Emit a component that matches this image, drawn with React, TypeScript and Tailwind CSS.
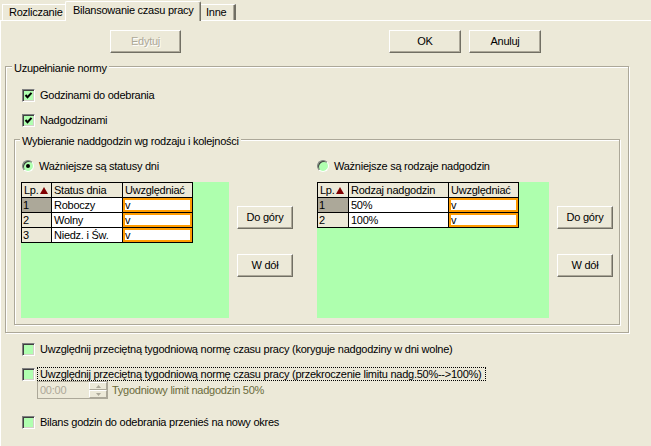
import React from 'react';

const Btn: React.FC<{ label: string; disabled?: boolean; className?: string }> = ({ label, disabled, className }) => (
    <button
        className={`h-[23px] flex items-center justify-center bg-[#ece9d8] border border-t-white border-l-white border-r-[#716f64] border-b-[#716f64] shadow-[inset_-1px_-1px_0_#aca899] ${disabled ? 'text-[#aca899] [text-shadow:1px_1px_0_#fff]' : 'text-black'} ${className ?? ''}`}
    >
        <span className="font-normal">{label}</span>
    </button>
);

const Check: React.FC<{ checked?: boolean }> = ({ checked }) => (
    <span className="w-[13px] h-[13px] shrink-0 flex items-center justify-center bg-[#b0ffb0] border border-t-[#808080] border-l-[#808080] border-b-white border-r-white shadow-[inset_1px_1px_0_#404040,inset_-1px_-1px_0_#d4d0c8]">
        {checked && (
            <svg width="9" height="9" viewBox="0 0 9 9">
                <path d="M1.5 4 L3.5 6.2 L7.5 1.8" fill="none" stroke="#000" strokeWidth="2" />
            </svg>
        )}
    </span>
);

const Radio: React.FC<{ checked?: boolean }> = ({ checked }) => (
    <span className="w-[12px] h-[12px] shrink-0 rounded-full flex items-center justify-center bg-[#b0ffb0] border border-t-[#808080] border-l-[#808080] border-b-white border-r-white shadow-[inset_1px_1px_0_#404040]">
        {checked && <span className="w-[4px] h-[4px] rounded-full bg-black" />}
    </span>
);

const SortArrow = () => (
    <svg width="8" height="7" viewBox="0 0 8 7" className="ml-[1px]">
        <path d="M4 0 L8 7 L0 7 Z" fill="#800000" />
    </svg>
);

type Row = { lp: string; name: string };

const Grid: React.FC<{ cols: string; title: string; rows: Row[]; width: string }> = ({ cols, title, rows, width }) => (
    <div className={`bg-[#aeffae] h-[136px] ${width}`}>
        <div className={`grid ${cols} w-fit border-l border-t border-black`}>
            <div className="h-[15px] border-r border-b border-black bg-[#ece9d8] pl-[2px] flex items-center">
                Lp.<SortArrow />
            </div>
            <div className="h-[15px] border-r border-b border-black bg-[#ece9d8] pl-[2px] flex items-center">{title}</div>
            <div className="h-[15px] border-r border-b border-black bg-[#ece9d8] pl-[2px] flex items-center">Uwzględniać</div>
            {rows.map((r, i) => (
                <React.Fragment key={r.lp}>
                    <div className={`h-[15px] border-r border-b border-black pl-[1px] flex items-center ${i === 0 ? 'bg-[#aca899]' : 'bg-[#ece9d8]'}`}>{r.lp}</div>
                    <div className="h-[15px] border-r border-b border-black bg-white pl-[2px] flex items-center">{r.name}</div>
                    <div className="h-[15px] border-r border-b border-black bg-white pl-[2px] flex items-center shadow-[inset_0_0_0_2px_#ff9c00]">v</div>
                </React.Fragment>
            ))}
        </div>
    </div>
);

const SideButtons = () => (
    <div className="flex flex-col pt-[24px] gap-[25px]">
        <Btn label="Do góry" className="w-[56px]" />
        <Btn label="W dół" className="w-[56px]" />
    </div>
);

export default function App() {
    return (
        <div className="w-[651px] h-[446px] overflow-hidden bg-[#ece9d8] text-[11px] leading-[13px] tracking-[-0.25px] text-black font-['Liberation_Sans',Arial,sans-serif]">
            {/* Tabs */}
            <div className="relative z-10 flex items-end h-[21px] pl-[2px]">
                <div className="h-[16px] mb-[1px] w-[63px] pl-[6px] border-t border-l border-white flex items-center">Rozliczanie</div>
                <div className="h-[20px] w-[136px] pl-[7px] bg-[#ece9d8] border-t border-l border-white border-r border-r-[#716f64] shadow-[inset_-1px_0_0_#aca899] rounded-t-[2px] flex items-center pb-[2px]">
                    Bilansowanie czasu pracy
                </div>
                <div className="h-[16px] mb-[1px] w-[35px] pl-[5px] border-t border-white border-r-2 border-r-[#716f64] shadow-[inset_-1px_0_0_#aca899] flex items-center">Inne</div>
            </div>

            {/* Tab panel */}
            <div className="-mt-[1px] h-[430px] border-t border-l border-white">
                <div className="flex pt-[9px] pl-[109px]">
                    <Btn label="Edytuj" disabled className="w-[71px]" />
                    <Btn label="OK" className="w-[72px] ml-[208px]" />
                    <Btn label="Anuluj" className="w-[72px] ml-[8px]" />
                </div>

                <fieldset className="ml-[4px] mt-[5px] w-[624px] border border-[#aca899] shadow-[inset_1px_1px_0_#fff,1px_1px_0_#fff] pb-[7px]">
                    <legend className="ml-[6px] px-[2px] pt-[4px] bg-[#ece9d8]">Uzupełnianie normy</legend>
                    <div className="flex items-center mt-[14px] ml-[16px] gap-[5px]">
                        <Check checked />
                        <span>Godzinami do odebrania</span>
                    </div>
                    <div className="flex items-center mt-[12px] ml-[16px] gap-[5px]">
                        <Check checked />
                        <span>Nadgodzinami</span>
                    </div>

                    <fieldset className="ml-[8px] mt-[4px] w-[606px] border border-[#aca899] shadow-[inset_1px_1px_0_#fff,1px_1px_0_#fff] pb-[6px]">
                        <legend className="ml-[5px] px-[2px] pt-[4px] bg-[#ece9d8]">Wybieranie naddgodzin wg rodzaju i kolejności</legend>
                        <div className="flex pl-[6px] mt-[12px] gap-[24px]">
                            <div className="flex flex-col">
                                <div className="flex items-center gap-[5px] ml-[1px] h-[12px]">
                                    <Radio checked />
                                    <span>Ważniejsze są statusy dni</span>
                                </div>
                                <div className="flex gap-[8px] mt-[10px]">
                                    <Grid
                                        width="w-[208px]"
                                        cols="grid-cols-[30px_71px_70px]"
                                        title="Status dnia"
                                        rows={[
                                            { lp: '1', name: 'Roboczy' },
                                            { lp: '2', name: 'Wolny' },
                                            { lp: '3', name: 'Niedz. i Św.' },
                                        ]}
                                    />
                                    <SideButtons />
                                </div>
                            </div>
                            <div className="flex flex-col">
                                <div className="flex items-center gap-[5px] h-[12px]">
                                    <Radio />
                                    <span>Ważniejsze są rodzaje nadgodzin</span>
                                </div>
                                <div className="flex gap-[8px] mt-[10px]">
                                    <Grid
                                        width="w-[232px]"
                                        cols="grid-cols-[31px_100px_70px]"
                                        title="Rodzaj nadgodzin"
                                        rows={[
                                            { lp: '1', name: '50%' },
                                            { lp: '2', name: '100%' },
                                        ]}
                                    />
                                    <SideButtons />
                                </div>
                            </div>
                        </div>
                    </fieldset>
                </fieldset>

                {/* Bottom options */}
                <div className="flex items-center mt-[10px] ml-[21px] gap-[5px]">
                    <Check />
                    <span>Uwzględnij przeciętną tygodniową normę czasu pracy (koryguje nadgodziny w dni wolne)</span>
                </div>
                <div className="flex items-center mt-[11px] ml-[21px] gap-[2px]">
                    <Check />
                    <span className="border border-dotted border-black pl-[2px] pr-[3px] leading-[12px]">
                        Uwzględnij przeciętną tygodniową normę czasu pracy (przekroczenie limitu nadg.50%--&gt;100%)
                    </span>
                </div>
                <div className="flex items-center ml-[36px] mt-0 gap-[4px]">
                    <div className="flex h-[18px] w-[71px] border border-[#aca899] bg-[#ece9d8]">
                        <span className="flex-1 pl-[2px] flex items-center text-[#aca899]">00:00</span>
                        <div className="w-[18px] flex flex-col">
                            <span className="flex-1 flex items-center justify-center border border-t-white border-l-white border-r-[#aca899] border-b-[#aca899]">
                                <svg width="5" height="3" viewBox="0 0 5 3"><path d="M2.5 0 L5 3 L0 3 Z" fill="#aca899" /></svg>
                            </span>
                            <span className="flex-1 flex items-center justify-center border border-t-white border-l-white border-r-[#aca899] border-b-[#aca899]">
                                <svg width="5" height="3" viewBox="0 0 5 3"><path d="M0 0 L5 0 L2.5 3 Z" fill="#aca899" /></svg>
                            </span>
                        </div>
                    </div>
                    <span className="text-[#6b6b3b]">Tygodniowy limit nadgodzin 50%</span>
                </div>
                <div className="flex items-center mt-[17px] ml-[21px] gap-[5px]">
                    <Check />
                    <span>Bilans godzin do odebrania przenieś na nowy okres</span>
                </div>
            </div>
        </div>
    );
}
